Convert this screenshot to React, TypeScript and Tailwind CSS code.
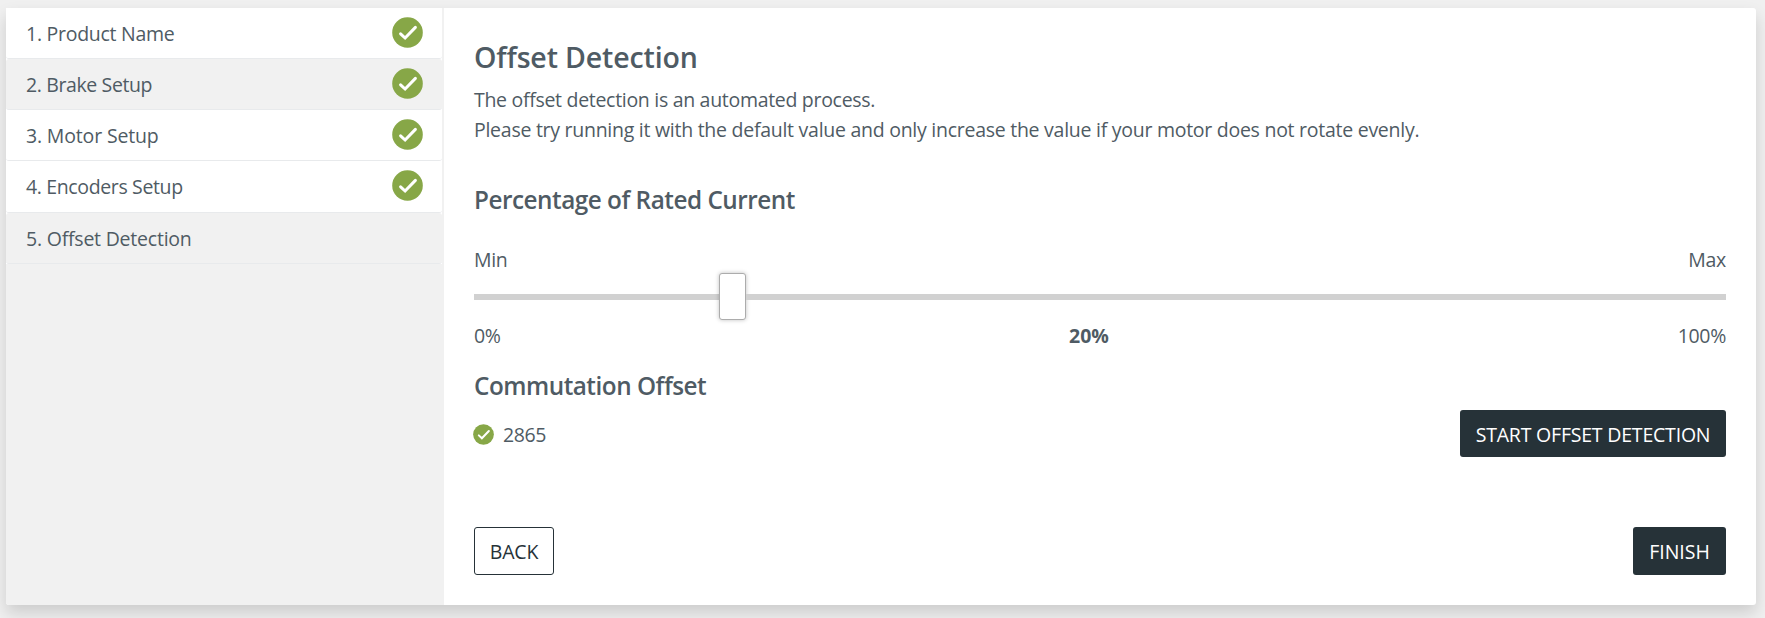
import React from "react";

const steps = [
  { label: "1. Product Name", done: true, row: "h-[51px] bg-white", spacing: "tracking-[-0.27px]" },
  { label: "2. Brake Setup", done: true, row: "h-[51px] bg-[#f1f1f1]", spacing: "tracking-[-0.38px]" },
  { label: "3. Motor Setup", done: true, row: "h-[51px] bg-white", spacing: "tracking-[-0.16px]" },
  { label: "4. Encoders Setup", done: true, row: "h-[52px] bg-white", spacing: "tracking-[-0.36px]" },
  { label: "5. Offset Detection", done: false, row: "h-[51px] bg-[#f1f1f1]", spacing: "tracking-[-0.22px]" },
];

function CheckCircle({ className }: { className: string }) {
  return (
    <svg viewBox="0 0 31 31" className={className} aria-hidden="true">
      <circle cx="15.5" cy="15.5" r="15.3" fill="#87a747" />
      <path d="M8.6 16.8 L13.1 21 L23.4 10.4" fill="none" stroke="#fff" strokeWidth="3" strokeLinecap="round" strokeLinejoin="miter" />
    </svg>
  );
}

export default function App() {
  return (
    <div className="h-[618px] w-[1765px] overflow-hidden bg-[#f0f0f0] pt-2 pl-1.5 font-['Open_Sans',sans-serif] text-[19.5px] leading-[30px] text-[#4f5b64]">
      <div className="flex h-[597px] w-[1750px] rounded-[3px] bg-white shadow-[0_8px_16px_rgba(0,0,0,0.15)]">
        <aside className="w-[438px] rounded-l-[3px] bg-[#f1f1f1]">
          <ul className="w-[438px] border-r-2 border-[#f1f1f1] bg-white">
            {steps.map((step) => (
              <li key={step.label} className={`flex justify-between rounded-[3px] border-b border-[#e8eaec] pr-[19px] pl-5 ${step.row}`}>
                <span className={`pt-[11px] ${step.spacing}`}>{step.label}</span>
                {step.done && <CheckCircle className="mt-[9px] h-[31px] w-[31px]" />}
              </li>
            ))}
          </ul>
        </aside>
        <main className="flex w-[1312px] flex-col pr-[30px] pl-[30px]">
          <h1 className="mt-[29px] h-[48px] text-[28.5px] leading-[40px] font-semibold tracking-[-0.14px]">Offset Detection</h1>
          <p className="tracking-[-0.3px] whitespace-nowrap">The offset detection is an automated process.</p>
          <p className="tracking-[-0.265px] whitespace-nowrap">Please try running it with the default value and only increase the value if your motor does not rotate evenly.</p>
          <h2 className="mt-[37px] h-[36px] text-[24.3px] leading-[36px] font-semibold tracking-[-0.48px]">Percentage of Rated Current</h2>
          <div className="mt-[27px] flex h-[29px] justify-between tracking-[-0.3px]">
            <span>Min</span>
            <span>Max</span>
          </div>
          <div className="-mt-[1px] flex h-[47px] items-center">
            <div className="h-1.5 w-[245px] bg-[#d1d1d1]" />
            <div className="h-[47px] w-[27px] rounded-[3px] border border-[#acacac] bg-white shadow-[0_0_4px_rgba(0,0,0,0.25)]" />
            <div className="h-1.5 flex-1 bg-[#d1d1d1]" />
          </div>
          <div className="mt-px flex justify-between tracking-[-0.3px]">
            <span className="w-[100px]">0%</span>
            <span className="mr-[22px] font-bold tracking-normal">20%</span>
            <span className="w-[100px] text-right">100%</span>
          </div>
          <h2 className="mt-[17px] h-[36px] text-[24.3px] leading-[36px] font-semibold tracking-[-0.48px]">Commutation Offset</h2>
          <div className="mt-[6px] flex h-[47px] justify-between">
            <div className="flex">
              <CheckCircle className="mt-[14px] -ml-px h-[21px] w-[21px]" />
              <span className="pt-[10px] pl-[9px] tracking-[-0.4px]">2865</span>
            </div>
            <button className="h-[47px] w-[266px] rounded-[3px] bg-[#263238] pt-[2px] tracking-[-0.2px] whitespace-nowrap text-white">START OFFSET DETECTION</button>
          </div>
          <div className="mt-[70px] flex h-12 justify-between">
            <button className="h-12 w-20 rounded-[3px] border border-[#263238] bg-white pt-px tracking-[-0.2px] text-[#263238]">BACK</button>
            <button className="h-12 w-[93px] rounded-[3px] bg-[#263238] pt-px text-white">FINISH</button>
          </div>
        </main>
      </div>
    </div>
  );
}
